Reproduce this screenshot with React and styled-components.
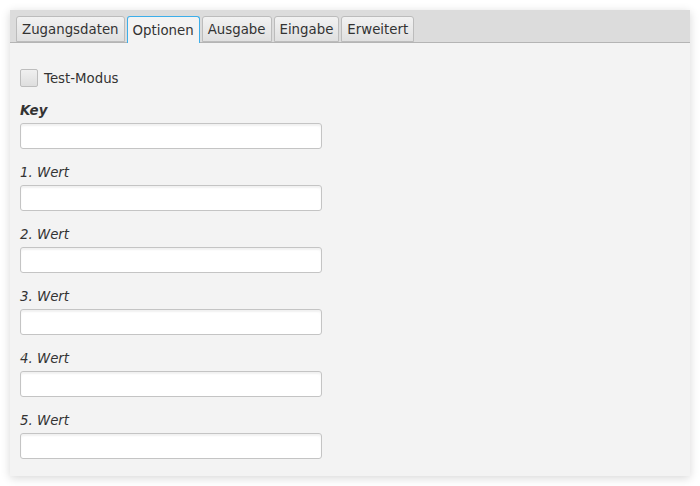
import React, { useState } from "react";
import styled, { createGlobalStyle } from "styled-components";

const GlobalStyle = createGlobalStyle`
  html, body {
    margin: 0;
    padding: 0;
    background: #ffffff;
    font-family: "DejaVu Sans", "Liberation Sans", sans-serif;
  }
`;

const Page = styled.div`
  padding: 10px;
  width: 700px;
  height: 486px;
  box-sizing: border-box;
`;

const Window = styled.div`
  width: 680px;
  height: 466px;
  background: #f3f3f3;
  box-shadow: 0 2px 9px rgba(0, 0, 0, 0.16);
  display: flex;
  flex-direction: column;
`;

const TabBar = styled.div`
  display: flex;
  align-items: flex-end;
  gap: 2px;
  height: 33px;
  padding: 0 6px;
  box-sizing: border-box;
  background: #dcdcdc;
  border-bottom: 1px solid #b4b4b4;
`;

const Tab = styled.button`
  font-family: inherit;
  font-size: 13.33px;
  color: #333;
  height: ${(p) => (p.active ? "27px" : "26px")};
  margin-bottom: ${(p) => (p.active ? "-1px" : "0")};
  padding: 2px 5px 0;
  border: 1px solid ${(p) => (p.active ? "#3daee9" : "#bcbcbc")};
  border-bottom: ${(p) => (p.active ? "none" : "1px solid #bcbcbc")};
  border-radius: 3px 3px 0 0;
  background: ${(p) =>
    p.active ? "#f3f3f3" : "linear-gradient(#f2f2f2, #e0e0e0)"};
  cursor: pointer;
  line-height: 1;
`;

const Content = styled.div`
  padding: 26px 10px 0;
  display: flex;
  flex-direction: column;
`;

const CheckRow = styled.label`
  display: flex;
  align-items: center;
  gap: 6px;
  font-size: 13.33px;
  color: #333;
  margin-bottom: 16px;
  cursor: pointer;
`;

const Box = styled.span`
  width: 16px;
  height: 16px;
  border: 1px solid #bdbdbd;
  border-radius: 2px;
  background: linear-gradient(#f0f0f0, #dedede);
  display: flex;
  align-items: center;
  justify-content: center;
  font-size: 12px;
  color: #333;
`;

const Field = styled.div`
  display: flex;
  flex-direction: column;
  margin-bottom: 16px;
`;

const Label = styled.div`
  font-size: 13.33px;
  line-height: 16px;
  font-style: italic;
  font-weight: ${(p) => (p.strong ? "bold" : "normal")};
  color: #333;
  margin-bottom: 4px;
`;

const Input = styled.input`
  width: 302px;
  height: 26px;
  box-sizing: border-box;
  border: 1px solid #c4c4c4;
  border-radius: 3px;
  background: #fff;
  box-shadow: inset 0 2px 2px rgba(0, 0, 0, 0.06);
  font-family: inherit;
  font-size: 13px;
  padding: 0 5px;
  outline: none;
`;

const tabs = ["Zugangsdaten", "Optionen", "Ausgabe", "Eingabe", "Erweitert"];
const fields = ["1. Wert", "2. Wert", "3. Wert", "4. Wert", "5. Wert"];

export default function App() {
  const [active, setActive] = useState(1);
  const [test, setTest] = useState(false);

  return (
    <Page>
      <GlobalStyle />
      <Window>
        <TabBar>
          {tabs.map((t, i) => (
            <Tab key={t} active={i === active} onClick={() => setActive(i)}>
              {t}
            </Tab>
          ))}
        </TabBar>
        <Content>
          <CheckRow onClick={() => setTest(!test)}>
            <Box>{test ? "✓" : ""}</Box>
            Test-Modus
          </CheckRow>
          <Field>
            <Label strong>Key</Label>
            <Input />
          </Field>
          {fields.map((f) => (
            <Field key={f}>
              <Label>{f}</Label>
              <Input />
            </Field>
          ))}
        </Content>
      </Window>
    </Page>
  );
}
